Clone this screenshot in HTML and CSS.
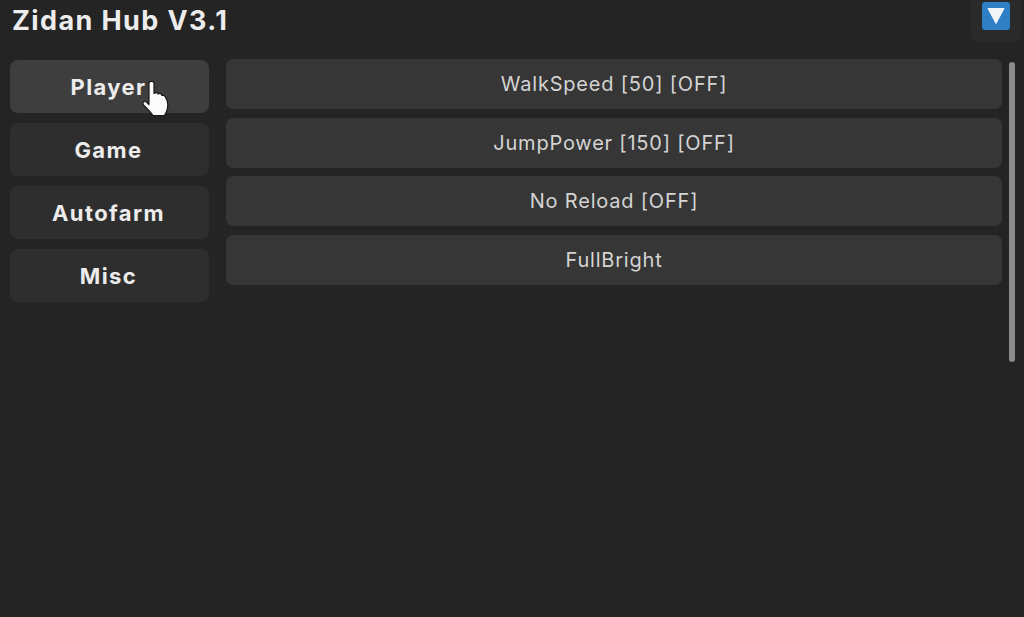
FILE: index.html
```html
<!DOCTYPE html>
<html lang="en">
<head>
<meta charset="utf-8">
<title>Zidan Hub V3.1</title>
<link rel="stylesheet" href="styles.css">
</head>
<body>
<div class="app">
  <header class="header">
    <h1 class="title">Zidan Hub V3.1</h1>
    <div class="toggle">
      <div class="toggle-icon">
        <svg width="18" height="18" viewBox="0 0 18 18"><path d="M1 1.500H17L9 16.500Z" fill="#f2f4f6" stroke="#f2f4f6" stroke-width="1" stroke-linejoin="round"/></svg>
      </div>
    </div>
  </header>
  <main class="main">
    <nav class="sidebar">
      <div class="tab tab-active"><span class="tab-label">Player</span>
        <svg class="cursor" width="28" height="37" viewBox="0 0 28 37"><path d="M8 3C8 .8 13 .8 13 3V13.500C15 12 16.500 12.500 17 14C18.500 13 20.500 13.500 21 15.500C22.500 15 24.500 16 25 18.500C26.500 20 27 24 26.500 28C26 31 25 33 23.500 35.500H12C10 32.500 7 29.500 2.500 25C1 23 3 20.500 5.500 22L8 24.500Z" fill="#fbfbfb" stroke="#181818" stroke-width="1.200" stroke-linejoin="round"/></svg>
      </div>
      <div class="tab"><span class="tab-label">Game</span></div>
      <div class="tab"><span class="tab-label">Autofarm</span></div>
      <div class="tab"><span class="tab-label">Misc</span></div>
    </nav>
    <section class="list">
      <div class="row">WalkSpeed [50] [OFF]</div>
      <div class="row">JumpPower [150] [OFF]</div>
      <div class="row">No Reload [OFF]</div>
      <div class="row">FullBright</div>
    </section>
    <div class="scrollbar"></div>
  </main>
</div>
</body>
</html>
```
FILE: styles.css
```css
* { box-sizing: border-box; }
html, body { margin: 0; padding: 0; }
body {
  width: 1024px;
  height: 617px;
  overflow: hidden;
  background: #242424;
  font-family: "Inter", "Liberation Sans", sans-serif;
}
.app { display: flex; flex-direction: column; height: 100%; }
.header {
  display: flex;
  justify-content: space-between;
  align-items: flex-start;
  height: 59px;
  padding: 0 3px 0 12px;
}
.title {
  margin: 6px 0 0;
  font-size: 27px;
  line-height: 30px;
  font-weight: 700;
  color: #ececec;
  letter-spacing: 1.400px;
}
.toggle {
  display: flex;
  justify-content: center;
  width: 50px;
  height: 42px;
  padding-top: 2px;
  background: #2a2a2a;
  border-radius: 0 0 7px 7px;
}
.toggle-icon {
  display: flex;
  align-items: center;
  justify-content: center;
  width: 28px;
  height: 28px;
  background: #2f7fc6;
  border-radius: 3px;
}
.main { display: flex; align-items: flex-start; padding-left: 10px; }
.sidebar { display: flex; flex-direction: column; gap: 10px; width: 199px; margin-top: 1px; }
.tab {
  position: relative;
  display: flex;
  align-items: center;
  justify-content: center;
  height: 53px;
  background: #2e2e2e;
  border-radius: 8px;
  font-size: 22px;
  font-weight: 700;
  letter-spacing: 1.400px;
  color: #ececec;
}
.tab-label { margin-left: -2px; }
.tab-active { background: #3e3e3e; }
.cursor { position: absolute; left: 131px; top: 20px; }
.list { display: flex; flex-direction: column; gap: 8.500px; width: 776px; margin-left: 17px; }
.row {
  display: flex;
  align-items: center;
  justify-content: center;
  height: 50px;
  background: #363636;
  border-radius: 7px;
  font-size: 20px;
  letter-spacing: 0.800px;
  color: #d4d4d4;
}
.scrollbar {
  width: 6px;
  height: 300px;
  margin: 3px 0 0 7px;
  background: #8a8a8a;
  border-radius: 3px;
}
```
